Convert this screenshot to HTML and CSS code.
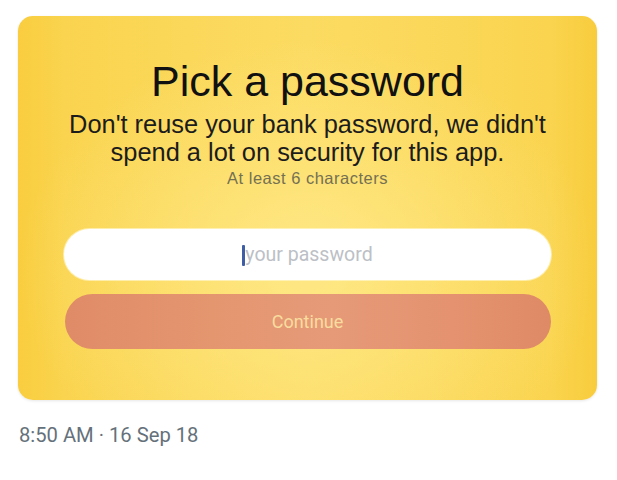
FILE: index.html
```html
<!DOCTYPE html>
<html>
<head>
<meta charset="utf-8">
<link rel="stylesheet" href="styles.css">
</head>
<body>
<div class="page">
  <div class="card">
    <h1 class="title">Pick a password</h1>
    <p class="subtitle">Don't reuse your bank password, we didn't<br>spend a lot on security for this app.</p>
    <p class="hint">At least 6 characters</p>
    <div class="field"><span class="caret"></span><span class="placeholder">your password</span></div>
    <div class="button">Continue</div>
  </div>
  <div class="timestamp">8:50 AM · 16 Sep 18</div>
</div>
</body>
</html>
```
FILE: styles.css
```css
html, body {
  margin: 0;
  padding: 0;
  background: #ffffff;
}
.page {
  padding: 16px 20px 0 18px;
  width: 579px;
}
.card {
  box-sizing: border-box;
  width: 579px;
  height: 384px;
  border-radius: 15px;
  padding-top: 41px;
  display: flex;
  flex-direction: column;
  align-items: center;
  background:
    radial-gradient(ellipse 50% 60% at 50% 66%, rgba(255, 236, 145, 0.75), rgba(255, 236, 145, 0) 100%),
    linear-gradient(90deg, #f9cd3e 0%, #fad44f 8%, #fbd85a 30%, #fcdb62 50%, #fbd85a 70%, #fad44f 92%, #f8cc3c 100%);
  box-shadow: 0 1px 3px rgba(0, 0, 0, 0.10);
}
.title {
  margin: 0;
  font-family: "Liberation Sans", Arial, sans-serif;
  font-weight: normal;
  font-size: 43px;
  line-height: 48px;
  color: #111111;
}
.subtitle {
  margin: 5px 0 0;
  font-family: "Liberation Sans", Arial, sans-serif;
  font-size: 25.4px;
  line-height: 28px;
  text-align: center;
  color: #1c1c1c;
}
.hint {
  margin: 3px 0 0;
  font-family: "Liberation Sans", Arial, sans-serif;
  font-size: 16.5px;
  letter-spacing: 0.5px;
  line-height: 19px;
  color: #747052;
}
.field {
  margin-top: 41px;
  width: 487px;
  height: 51px;
  border-radius: 26px;
  background: #ffffff;
  display: flex;
  align-items: center;
  justify-content: center;
  box-shadow: 0 0 0 1px rgba(255, 250, 220, 0.6);
}
.caret {
  width: 3px;
  height: 21px;
  background: #3f5ea6;
  border-radius: 1px;
  margin-top: 2px;
}
.placeholder {
  font-family: Roboto, "Noto Sans", sans-serif;
  font-size: 19.5px;
  color: #bcc0c6;
  line-height: 24px;
}
.button {
  margin-top: 14px;
  width: 486px;
  height: 55px;
  border-radius: 28px;
  background: linear-gradient(90deg, #e08b68 0%, #e4966f 30%, #e69a78 55%, #e4926f 80%, #df8a66 100%);
  display: flex;
  align-items: center;
  justify-content: center;
  font-family: Roboto, "Noto Sans", sans-serif;
  font-size: 18px;
  color: #f8dd9e;
}
.timestamp {
  margin-top: 23px;
  font-family: Roboto, "Noto Sans", sans-serif;
  font-size: 20.2px;
  line-height: 24px;
  color: #65717a;
  padding-left: 1px;
}
```
